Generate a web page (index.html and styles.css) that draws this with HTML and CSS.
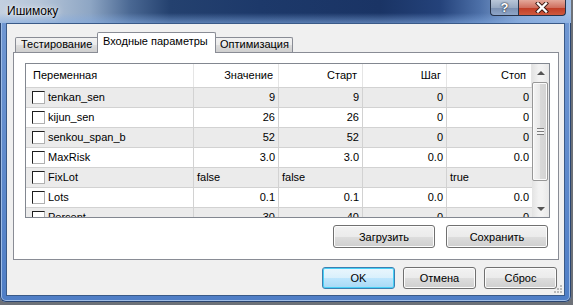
FILE: index.html
```html
<!DOCTYPE html>
<html>
  <head>
    <meta charset="utf-8" />
    <meta name="viewport" content="width=device-width, initial-scale=1.0" />
    <title>Ишимоку</title>
    <link rel="stylesheet" href="styles.css">
  </head>
  <body>
    <div class="window">
      <div class="titlebar">
        <span class="title">Ишимоку</span>
        <div class="caption">
          <span class="cap-btn cap-help">?</span>
          <span class="cap-btn cap-close">
            <svg width="14" height="11" viewBox="0 0 14 11">
              <path d="M3 1.5 L11 9.5 M11 1.5 L3 9.5" stroke="#3a1a14" stroke-width="4.2" stroke-linecap="square" />
              <path d="M3 1.5 L11 9.5 M11 1.5 L3 9.5" stroke="#ffffff" stroke-width="2.4" stroke-linecap="square" />
            </svg>
          </span>
        </div>
      </div>

      <div class="client">
        <div class="tabs">
          <div class="tab">Тестирование</div>
          <div class="tab tab-active">Входные параметры</div>
          <div class="tab">Оптимизация</div>
        </div>

        <div class="panel">
          <div class="list">
            <div class="grid">
              <div class="row head">
                <div class="cell">Переменная</div>
                <div class="cell num">Значение</div>
                <div class="cell num">Старт</div>
                <div class="cell num">Шаг</div>
                <div class="cell num">Стоп</div>
              </div>
              <div class="row alt">
                <div class="cell name"><span class="check"></span>tenkan_sen</div>
                <div class="cell num">9</div>
                <div class="cell num">9</div>
                <div class="cell num">0</div>
                <div class="cell num">0</div>
              </div>
              <div class="row">
                <div class="cell name"><span class="check"></span>kijun_sen</div>
                <div class="cell num">26</div>
                <div class="cell num">26</div>
                <div class="cell num">0</div>
                <div class="cell num">0</div>
              </div>
              <div class="row alt">
                <div class="cell name"><span class="check"></span>senkou_span_b</div>
                <div class="cell num">52</div>
                <div class="cell num">52</div>
                <div class="cell num">0</div>
                <div class="cell num">0</div>
              </div>
              <div class="row">
                <div class="cell name"><span class="check"></span>MaxRisk</div>
                <div class="cell num">3.0</div>
                <div class="cell num">3.0</div>
                <div class="cell num">0.0</div>
                <div class="cell num">0.0</div>
              </div>
              <div class="row alt">
                <div class="cell name"><span class="check"></span>FixLot</div>
                <div class="cell">false</div>
                <div class="cell">false</div>
                <div class="cell"></div>
                <div class="cell">true</div>
              </div>
              <div class="row">
                <div class="cell name"><span class="check"></span>Lots</div>
                <div class="cell num">0.1</div>
                <div class="cell num">0.1</div>
                <div class="cell num">0.0</div>
                <div class="cell num">0.0</div>
              </div>
              <div class="row alt">
                <div class="cell name"><span class="check"></span>Percent</div>
                <div class="cell num">30</div>
                <div class="cell num">40</div>
                <div class="cell num">0</div>
                <div class="cell num">0</div>
              </div>
            </div>
            <div class="vscroll">
              <div class="arrow"><span class="tri-up"></span></div>
              <div class="thumb"><span class="grip"></span></div>
              <div class="track-rest"></div>
              <div class="arrow"><span class="tri-down"></span></div>
            </div>
          </div>

          <div class="panel-actions">
            <button class="btn btn-wide" type="button">Загрузить</button>
            <button class="btn btn-wide" type="button">Сохранить</button>
          </div>
        </div>

        <div class="dialog-actions">
          <button class="btn btn-default" type="button">OK</button>
          <button class="btn" type="button">Отмена</button>
          <button class="btn" type="button">Сброс</button>
        </div>

        <svg class="size-grip" width="8" height="8" viewBox="0 0 8 8">
          <rect x="6" y="0" width="2" height="2" fill="#b9b9b9" />
          <rect x="3" y="3" width="2" height="2" fill="#b9b9b9" />
          <rect x="6" y="3" width="2" height="2" fill="#b9b9b9" />
          <rect x="0" y="6" width="2" height="2" fill="#b9b9b9" />
          <rect x="3" y="6" width="2" height="2" fill="#b9b9b9" />
          <rect x="6" y="6" width="2" height="2" fill="#b9b9b9" />
        </svg>
      </div>
    </div>
  </body>
</html>
```

FILE: styles.css
```css
* {
  margin: 0;
  padding: 0;
  box-sizing: border-box;
}

body {
  width: 573px;
  height: 305px;
  overflow: hidden;
  background: #6d7178;
  font-family: "Liberation Sans", Arial, sans-serif;
}

/* window frame */
.window {
  width: 571px;
  height: 302px;
  padding: 0 6px 6px 6px;
  display: flex;
  flex-direction: column;
  border-radius: 0 0 6px 6px;
  background: linear-gradient(to bottom, #7299d3, #4f7ec6);
  box-shadow: inset 0 0 0 1px #2a4570, inset 0 0 0 2px #9fbde6;
}

.titlebar {
  height: 23px;
  margin: 0 -6px;
  padding: 4px 0 0 7px;
  display: flex;
  align-items: flex-start;
  background:
    linear-gradient(to bottom, rgba(130, 170, 225, 0) 0, rgba(130, 170, 225, 0) 13px, rgba(130, 170, 225, 0.6) 23px),
    linear-gradient(to right, #c3d0e0 0, #b5c5d8 40px, #8ea6c4 90px, #4a6893 130px, #24416f 170px, #1d396a 260px, #1a3465 380px, #24427a 440px, #4d70a8 480px, #8aaad6 520px, #a3c0e6 571px);
}

.title {
  font-size: 12px;
  line-height: 15px;
  color: #000;
  text-shadow: 0 0 6px rgba(255, 255, 255, 0.9), 0 0 2px rgba(255, 255, 255, 0.8);
}

.caption {
  display: flex;
  margin: -4px 5px 0 auto;
}

.cap-btn {
  height: 16px;
  display: flex;
  align-items: center;
  justify-content: center;
  border: 1px solid #26334a;
  border-top: 0;
  color: #fff;
  font-weight: bold;
  font-size: 13px;
}

.cap-help {
  width: 28px;
  border-right: 0;
  border-radius: 0 0 0 4px;
  background: linear-gradient(to bottom, #b9c6d8, #98aac3 50%, #7a8fb0 51%, #8ea5c8);
  text-shadow: 0 0 2px #1c2433, 0 0 1px #1c2433;
}

.cap-close {
  width: 48px;
  border-radius: 0 0 4px 0;
  background: linear-gradient(to bottom, #e4a89a, #d0705f 50%, #bf3b24 51%, #cf5a3e);
}

/* client area */
.client {
  position: relative;
  flex: 1;
  display: flex;
  flex-direction: column;
  border: 1px solid #3a5a88;
  background: #f0f0f0;
  font-size: 11px;
  color: #000;
}

.tabs {
  height: 28px;
  padding-left: 8px;
  display: flex;
  align-items: flex-end;
  position: relative;
  z-index: 1;
}

.tab {
  height: 15px;
  padding-left: 5px;
  line-height: 13px;
  border: 1px solid #898c95;
  border-bottom: 0;
  border-radius: 2px 2px 0 0;
  background: linear-gradient(to bottom, #f2f2f2, #ebebeb 50%, #dddddd 51%, #cfcfcf);
  white-space: nowrap;
}

.tab:first-child {
  width: 84px;
}

.tab:last-child {
  width: 79px;
}

.tab-active {
  width: 119px;
  height: 21px;
  margin: 0 -2px -1px -2px;
  padding-top: 2px;
  background: #fff;
  position: relative;
  z-index: 2;
}

.panel {
  width: 546px;
  height: 208px;
  margin-left: 6px;
  padding: 10px 8px 11px 11px;
  border: 1px solid #898c95;
  background: #fff;
  display: flex;
  flex-direction: column;
  gap: 7px;
}

/* list view */
.list {
  width: 525px;
  height: 155px;
  border: 1px solid #828790;
  display: flex;
  overflow: hidden;
}

.grid {
  width: 506px;
  overflow: hidden;
}

.row {
  height: 20px;
  display: grid;
  grid-template-columns: 168px 85px 84px 84px 85px;
  border-bottom: 1px solid #d2d2d2;
  background: #fff;
}

.row.alt {
  background: #ebebeb;
}

.row.head {
  height: 24px;
}

.cell {
  padding: 0 3px;
  line-height: 19px;
  white-space: nowrap;
  overflow: hidden;
  border-right: 1px solid #d2d2d2;
}

.cell:last-child {
  border-right: 0;
}

.head .cell {
  line-height: 23px;
  padding: 0 5px 0 7px;
  border-right: 1px solid #e5e5e5;
}

.num {
  text-align: right;
}

.name {
  display: flex;
  align-items: center;
  padding-left: 6px;
}

.check {
  width: 13px;
  height: 13px;
  margin-right: 3px;
  flex: none;
  border: 1px solid;
  border-color: #1e1e1e #b0b0b0 #b0b0b0 #1e1e1e;
  background: #fff;
}

/* scrollbar */
.vscroll {
  width: 17px;
  display: flex;
  flex-direction: column;
  background: linear-gradient(to right, #e3e3e3, #f2f2f2 40%, #f2f2f2 60%, #e8e8e8);
}

.arrow {
  height: 17px;
  flex: none;
  display: flex;
  align-items: center;
  justify-content: center;
}

.tri-up {
  border-left: 4px solid transparent;
  border-right: 4px solid transparent;
  border-bottom: 4px solid #555;
}

.tri-down {
  border-left: 4px solid transparent;
  border-right: 4px solid transparent;
  border-top: 4px solid #555;
}

.thumb {
  height: 99px;
  margin: 1px 1px 0 0;
  flex: none;
  display: flex;
  align-items: center;
  justify-content: center;
  border: 1px solid #979797;
  border-radius: 2px;
  background: linear-gradient(to right, #f4f4f4, #e8e8e8 50%, #d9d9d9 51%, #d3d3d3);
  box-shadow: inset 0 0 0 1px #fbfbfb;
}

.grip {
  width: 7px;
  height: 7px;
  background: repeating-linear-gradient(to bottom, #7d7d7d 0, #7d7d7d 1px, #f4f4f4 1px, #f4f4f4 3px);
}

.track-rest {
  flex: 1;
}

/* buttons */
.panel-actions {
  display: flex;
  justify-content: flex-end;
  gap: 11px;
  padding-right: 2px;
}

.dialog-actions {
  display: flex;
  justify-content: flex-end;
  gap: 8px;
  margin-top: 7px;
  padding-right: 7px;
}

.btn {
  width: 73px;
  height: 22px;
  font-family: "Liberation Sans", Arial, sans-serif;
  font-size: 11px;
  color: #000;
  border: 1px solid #707070;
  border-radius: 3px;
  background: linear-gradient(to bottom, #f2f2f2, #ebebeb 50%, #dddddd 51%, #cfcfcf);
  box-shadow: inset 0 0 0 1px #fcfcfc;
}

.btn-wide {
  width: 102px;
  height: 23px;
}

.btn-default {
  border-color: #3c7fb1;
  background: linear-gradient(to bottom, #eaf6fd, #d9f0fc 50%, #bee6fd 51%, #a7d9f5);
  box-shadow: inset 0 0 0 1px #48d0f6;
}

.size-grip {
  position: absolute;
  right: 2px;
  bottom: 2px;
}
```
